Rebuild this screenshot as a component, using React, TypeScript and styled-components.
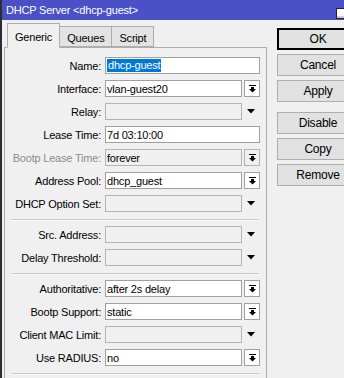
import React from 'react'
import styled, { createGlobalStyle } from 'styled-components'

type Kind = 'text' | 'combo' | 'drop' | 'sep'

interface Field {
  kind: Kind
  label?: string
  value?: string
  disabled?: boolean
  dimLabel?: boolean
  selected?: boolean
}

const fields: Field[] = [
  { kind: 'text', label: 'Name', value: 'dhcp-guest', selected: true },
  { kind: 'combo', label: 'Interface', value: 'vlan-guest20' },
  { kind: 'drop', label: 'Relay', disabled: true },
  { kind: 'text', label: 'Lease Time', value: '7d 03:10:00' },
  { kind: 'combo', label: 'Bootp Lease Time', value: 'forever', disabled: true, dimLabel: true },
  { kind: 'combo', label: 'Address Pool', value: 'dhcp_guest' },
  { kind: 'drop', label: 'DHCP Option Set', disabled: true },
  { kind: 'sep' },
  { kind: 'drop', label: 'Src. Address', disabled: true },
  { kind: 'drop', label: 'Delay Threshold', disabled: true },
  { kind: 'sep' },
  { kind: 'combo', label: 'Authoritative', value: 'after 2s delay' },
  { kind: 'combo', label: 'Bootp Support', value: 'static' },
  { kind: 'drop', label: 'Client MAC Limit', disabled: true },
  { kind: 'combo', label: 'Use RADIUS', value: 'no' },
  { kind: 'sep' },
]

const tabs = ['Generic', 'Queues', 'Script']

// combo button glyph: bar on top, arrow below
const ComboGlyph = () => (
  <svg width="7" height="8" viewBox="0 0 7 8">
    <rect x="0" y="0" width="7" height="1" fill="#000" />
    <rect x="2" y="2" width="3" height="2" fill="#000" />
    <polygon points="0,4 7,4 3.5,7.5" fill="#000" />
  </svg>
)

const DropGlyph = () => (
  <svg width="8" height="5" viewBox="0 0 8 5">
    <polygon points="0,0 8,0 4,4.5" fill="#000" />
  </svg>
)

const App = () => {
  let rows = []
  for (let i in fields) {
    const f = fields[i]
    if (f.kind === 'sep') {
      rows.push(<Separator key={i} />)
      continue
    }
    rows.push(
      <Row key={i}>
        <Label $dim={f.dimLabel}>{f.label + ':'}</Label>
        <Input $disabled={f.disabled} $wide={f.kind === 'text'}>
          {f.selected ? <Selection>{f.value}</Selection> : f.value}
        </Input>
        {f.kind === 'combo' && (
          <ComboButton $disabled={f.disabled}>
            <ComboGlyph />
          </ComboButton>
        )}
        {f.kind === 'drop' && (
          <DropArrow>
            <DropGlyph />
          </DropArrow>
        )}
      </Row>
    )
  }

  return (
    <Window>
      <GlobalStyle />
      <TitleBar>
        <span>DHCP Server &lt;dhcp-guest&gt;</span>
        <TitleIcon />
      </TitleBar>
      <Body>
        <LeftCol>
          <TabRow>
            {tabs.map((t, i) => (
              <Tab key={t} $active={i === 0}>{t}</Tab>
            ))}
          </TabRow>
          <Panel>
            <Form>{rows}</Form>
          </Panel>
        </LeftCol>
        <ButtonCol>
          <Button $default>OK</Button>
          <Button>Cancel</Button>
          <Button>Apply</Button>
          <Button $gap>Disable</Button>
          <Button>Copy</Button>
          <Button>Remove</Button>
        </ButtonCol>
      </Body>
    </Window>
  )
}

const GlobalStyle = createGlobalStyle`
  html, body {
    margin: 0;
    padding: 0;
    background: #f0f0f0;
  }
  body {
    font-family: "Liberation Sans", Arial, sans-serif;
    font-size: 11px;
    letter-spacing: -0.2px;
    color: #000;
    overflow: hidden;
  }
`
const Window = styled.div`
  width: 344px;
  height: 378px;
  overflow: hidden;
  box-sizing: border-box;
  border-left: 2px solid #2e2e2e;
  background: #f0f0f0;
`
const TitleBar = styled.div`
  height: 20px;
  background: #4a51c6;
  color: #fff;
  display: flex;
  align-items: center;
  justify-content: space-between;
  padding-left: 4px;
  font-size: 11px;
`
const TitleIcon = styled.div`
  align-self: flex-start;
  margin-top: 8px;
  margin-right: -3px;
  width: 9px;
  height: 9px;
  border: 1px solid #222;
  background: #fff;
  box-shadow: inset 0 -2px 0 #cfcfcf;
`
const Body = styled.div`
  display: flex;
`
const LeftCol = styled.div`
  margin-left: 2px;
  width: 263px;
  display: flex;
  flex-direction: column;
  flex-shrink: 0;
`
const TabRow = styled.div`
  display: flex;
  align-items: flex-end;
  height: 28px;
  padding-left: 3px;
  margin-bottom: -1px;
  position: relative;
  z-index: 1;
`
const Tab = styled.div<{ $active?: boolean }>`
  box-sizing: border-box;
  height: ${(p) => (p.$active ? '25px' : '21px')};
  margin-bottom: ${(p) => (p.$active ? '0' : '1px')};
  padding: ${(p) => (p.$active ? '2px 7px 0 7px' : '2px 7px 0')};
  display: flex;
  align-items: center;
  border: 1px solid #adadad;
  border-bottom-color: ${(p) => (p.$active ? '#f0f0f0' : '#adadad')};
  background: ${(p) => (p.$active ? '#f0f0f0' : '#e3e3e3')};
  & + & {
    margin-left: -1px;
  }
`
const Panel = styled.div`
  border: 1px solid #adadad;
  height: 360px;
  padding-top: 9px;
`
const Form = styled.div`
  display: flex;
  flex-direction: column;
  gap: 6px;
`
const Row = styled.div`
  display: flex;
  align-items: center;
  height: 17px;
`
const Label = styled.div<{ $dim?: boolean }>`
  width: 96px;
  margin-right: 4px;
  text-align: right;
  white-space: nowrap;
  color: ${(p) => (p.$dim ? '#8d8d8d' : '#000')};
`
const Input = styled.div<{ $disabled?: boolean; $wide?: boolean }>`
  box-sizing: border-box;
  width: ${(p) => (p.$wide ? '155px' : '137px')};
  height: 17px;
  border: 1px solid ${(p) => (p.$disabled ? '#b4b4b4' : '#a0a0a0')};
  background: ${(p) => (p.$disabled ? '#f0f0f0' : '#fff')};
  padding-left: 1px;
  display: flex;
  align-items: center;
  white-space: nowrap;
  overflow: hidden;
`
const Selection = styled.span`
  background: #0078d7;
  color: #fff;
  padding: 0 1px;
  line-height: 13px;
`
const ComboButton = styled.div<{ $disabled?: boolean }>`
  box-sizing: border-box;
  width: 16px;
  height: 17px;
  margin-left: 2px;
  border: 1px solid ${(p) => (p.$disabled ? '#b4b4b4' : '#a0a0a0')};
  background: ${(p) => (p.$disabled ? '#f0f0f0' : '#fff')};
  display: flex;
  align-items: center;
  justify-content: center;
`
const DropArrow = styled.div`
  width: 18px;
  height: 17px;
  display: flex;
  align-items: center;
  justify-content: center;
`
const Separator = styled.div`
  height: 1px;
  width: 247px;
  margin: 1px 0 0 7px;
  background: #c8c8c8;
  box-shadow: 0 1px 0 #fafafa;
`
const ButtonCol = styled.div`
  margin-left: 10px;
  padding-top: 8px;
  display: flex;
  flex-direction: column;
  gap: 4px;
  flex-shrink: 0;
`
const Button = styled.div<{ $default?: boolean; $gap?: boolean }>`
  box-sizing: border-box;
  width: 82px;
  height: 22px;
  margin-top: ${(p) => (p.$gap ? '6px' : '0')};
  border: 1px solid ${(p) => (p.$default ? '#000' : '#adadad')};
  box-shadow: ${(p) => (p.$default ? 'inset 0 0 0 1px #000' : 'none')};
  background: #e1e1e1;
  font-size: 12px;
  display: flex;
  align-items: center;
  justify-content: center;
`

export default App
